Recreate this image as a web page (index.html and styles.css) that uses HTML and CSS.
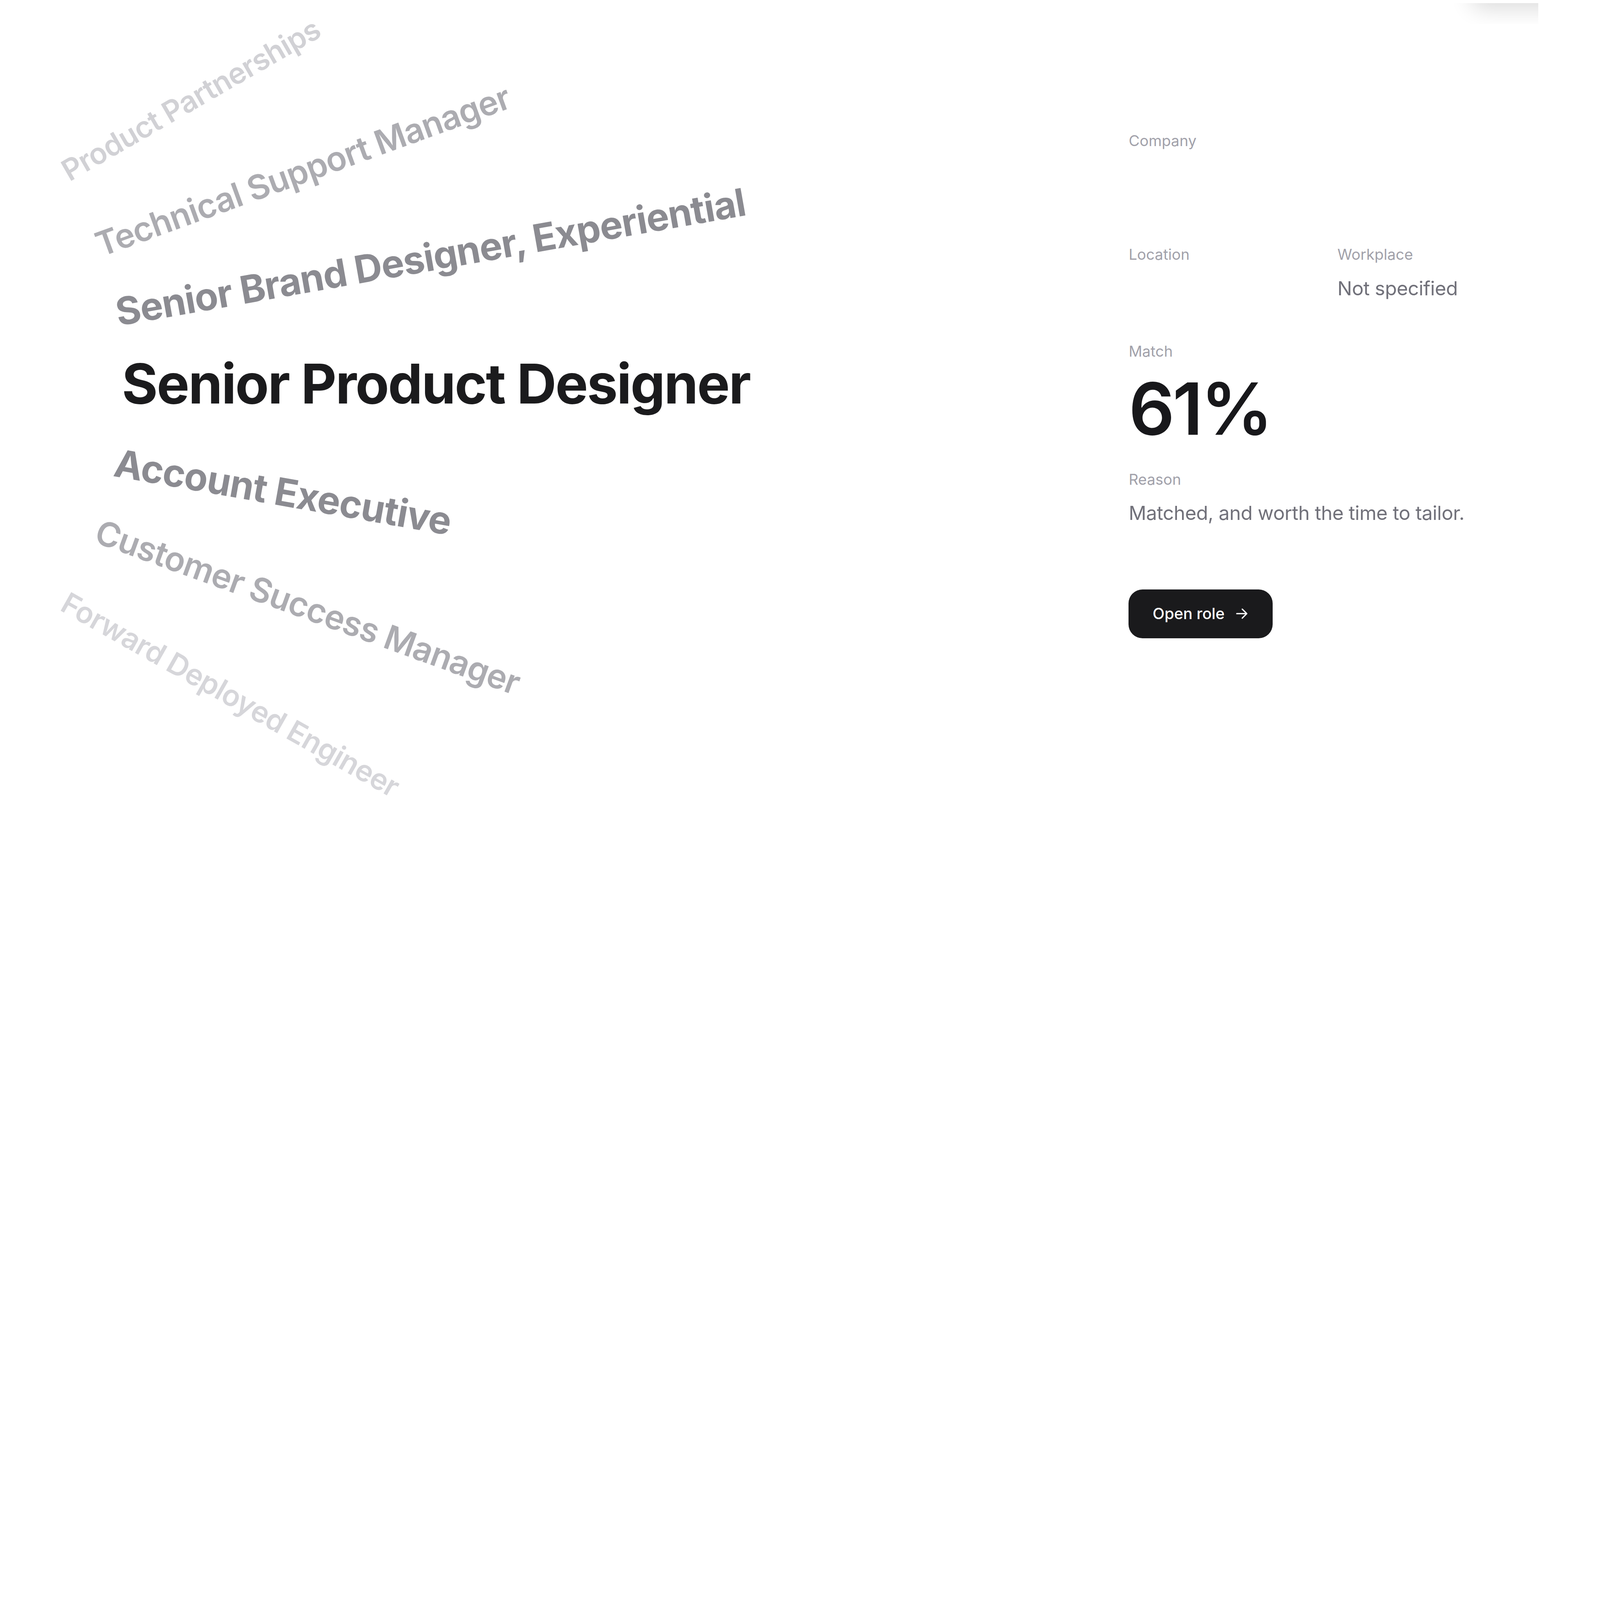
FILE: index.html
```html
<!DOCTYPE html>
<html lang="en">
<head>
<meta charset="utf-8">
<title>Role match</title>
<link rel="stylesheet" href="styles.css">
</head>
<body>
<main class="page">
  <section class="wheel" aria-label="Roles">
    <div class="role r-n3">Product Partnerships</div>
    <div class="role r-n2">Technical Support Manager</div>
    <div class="role r-n1">Senior Brand Designer, Experiential</div>
    <div class="role r-0">Senior Product Designer</div>
    <div class="role r-p1">Account Executive</div>
    <div class="role r-p2">Customer Success Manager</div>
    <div class="role r-p3">Forward Deployed Engineer</div>
  </section>
  <aside class="details">
    <div class="field company">
      <div class="label">Company</div>
      <div class="value"></div>
    </div>
    <div class="row">
      <div class="field">
        <div class="label">Location</div>
        <div class="value"></div>
      </div>
      <div class="field">
        <div class="label">Workplace</div>
        <div class="value">Not specified</div>
      </div>
    </div>
    <div class="field match">
      <div class="label">Match</div>
      <div class="score">61%</div>
    </div>
    <div class="field reason">
      <div class="label">Reason</div>
      <div class="value">Matched, and worth the time to tailor.</div>
    </div>
    <a class="open-btn" href="#">
      <span>Open role</span>
      <svg class="arrow" viewBox="0 0 14 14" aria-hidden="true"><path d="M2 7h10M7.5 2.5L12 7l-4.5 4.5" fill="none" stroke="currentColor" stroke-width="1.3" stroke-linecap="round" stroke-linejoin="round"/></svg>
    </a>
  </aside>
  <div class="corner-shadow"><div class="ghost"></div></div>
</main>
</body>
</html>
```

FILE: styles.css
```css
/* 1rem = 10 design px (design width 1560 px) */
html {
  font-size: 25.57px;
  background: #ffffff;
}

body {
  margin: 0;
  background: #ffffff;
  font-family: Inter, "Noto Sans", "Liberation Sans", sans-serif;
  font-size: 1.6rem;
  color: #18181b;
  -webkit-font-smoothing: antialiased;
}

.page {
  position: relative;
  display: grid;
  grid-template-columns: 113rem 1fr;
  width: 156rem;
  height: 82.5rem;
  overflow: hidden;
}

/* wheel of roles */
.wheel {
  position: relative;
  height: 82.5rem;
}

.role {
  position: absolute;
  white-space: nowrap;
  line-height: 1;
  letter-spacing: -0.015em;
  transform-origin: 0 0;
}

.r-0 {
  left: 12.2rem;
  top: 38.4rem;
  font-size: 5.5rem;
  font-weight: 700;
  letter-spacing: -0.02em;
  color: #1b1b1d;
  transform: translateY(-50%);
}

.r-n1 {
  left: 11.6rem;
  top: 31.3rem;
  font-size: 3.83rem;
  font-weight: 700;
  color: #8b8b91;
  transform: rotate(-10deg) translateY(-50%);
}

.r-n2 {
  left: 9.7rem;
  top: 24.6rem;
  font-size: 3.38rem;
  font-weight: 600;
  color: #acacb1;
  transform: rotate(-20deg) translateY(-50%);
}

.r-n3 {
  left: 6.4rem;
  top: 17.3rem;
  font-size: 2.95rem;
  font-weight: 600;
  color: #d1d1d5;
  transform: rotate(-30deg) translateY(-50%);
}

.r-p1 {
  left: 11.5rem;
  top: 46.3rem;
  font-size: 3.84rem;
  font-weight: 700;
  color: #8b8b91;
  transform: rotate(10deg) translateY(-50%);
}

.r-p2 {
  left: 9.7rem;
  top: 53.1rem;
  font-size: 3.38rem;
  font-weight: 600;
  color: #acacb1;
  transform: rotate(20deg) translateY(-50%);
}

.r-p3 {
  left: 6.4rem;
  top: 60.1rem;
  font-size: 2.95rem;
  font-weight: 600;
  color: #d6d6da;
  transform: rotate(29.5deg) translateY(-50%);
}

/* details panel */
.details {
  display: flex;
  flex-direction: column;
  align-items: flex-start;
  padding-top: 13.1rem;
}

.field {
  display: flex;
  flex-direction: column;
}

.label {
  font-size: 1.5rem;
  line-height: 2rem;
  color: #a1a1aa;
}

.value {
  margin-top: 1rem;
  min-height: 2.8rem;
  font-size: 1.95rem;
  line-height: 2.8rem;
  letter-spacing: -0.01em;
  color: #71717a;
}

.row {
  display: grid;
  grid-template-columns: 20.9rem 20rem;
  margin-top: 5.6rem;
}

.match {
  margin-top: 3.9rem;
}

.score {
  margin-top: 1.1rem;
  font-size: 7.2rem;
  line-height: 7.2rem;
  font-weight: 600;
  letter-spacing: -0.03em;
  color: #18181b;
}

.reason {
  margin-top: 2.5rem;
}

.open-btn {
  display: inline-flex;
  align-items: center;
  gap: 1rem;
  margin-top: 6.2rem;
  height: 4.9rem;
  padding: 0 2.4rem;
  box-sizing: border-box;
  border-radius: 1.4rem;
  background: #1a1a1c;
  color: #ffffff;
  font-size: 1.55rem;
  font-weight: 500;
  text-decoration: none;
}

.arrow {
  display: block;
  width: 1.4rem;
  height: 1.4rem;
}

/* clipped shadow of an element above the viewport */
.corner-shadow {
  position: absolute;
  top: 0.3rem;
  right: 2rem;
  width: 8.4rem;
  height: 2.1rem;
  overflow: hidden;
}

.ghost {
  position: absolute;
  top: -4rem;
  left: 1.6rem;
  right: -4rem;
  height: 4rem;
  border-radius: 1.4rem;
  background: #ffffff;
  box-shadow: 0 0.6rem 2.2rem rgba(0, 0, 0, 0.14);
}
```
